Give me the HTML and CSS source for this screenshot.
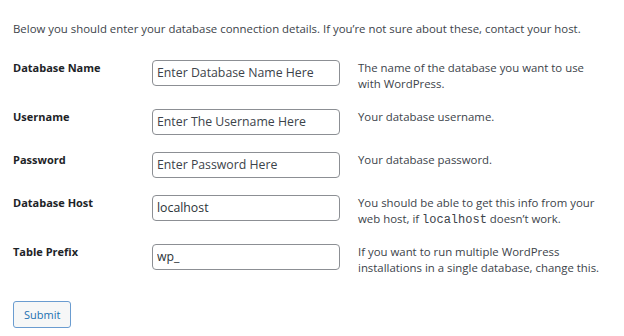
FILE: index.html
```html
<!DOCTYPE html>
<html lang="en">

<head>
    <meta charset="UTF-8">
    <meta name="viewport" content="width=device-width, initial-scale=1.0">
    <title>Database setup</title>
    <link rel="stylesheet" href="styles.css">
</head>

<body>
    <form class="setup" method="post">
        <p class="intro">Below you should enter your database connection details. If you’re not sure about these, contact your host.</p>
        <div class="form-table">
            <label class="label" for="dbname">Database Name</label>
            <input class="field" id="dbname" type="text" placeholder="Enter Database Name Here">
            <p class="desc">The name of the database you want to use with WordPress.</p>

            <label class="label" for="uname">Username</label>
            <input class="field" id="uname" type="text" placeholder="Enter The Username Here">
            <p class="desc">Your database username.</p>

            <label class="label" for="pwd">Password</label>
            <input class="field" id="pwd" type="text" placeholder="Enter Password Here">
            <p class="desc">Your database password.</p>

            <label class="label" for="dbhost">Database Host</label>
            <input class="field" id="dbhost" type="text" value="localhost">
            <p class="desc">You should be able to get this info from your web host, if <code>localhost</code> doesn’t work.</p>

            <label class="label" for="prefix">Table Prefix</label>
            <input class="field" id="prefix" type="text" value="wp_">
            <p class="desc">If you want to run multiple WordPress installations in a single database, change this.</p>
        </div>
        <button class="submit" type="submit">Submit</button>
    </form>
</body>

</html>
```

FILE: styles.css
```css
* {
    margin: 0;
    padding: 0;
    box-sizing: border-box;
}

body {
    font-family: 'Open Sans', sans-serif;
    font-size: 11.4px;
    color: #3c434a;
    background: #fff;
}

.setup {
    padding: 21px 13px 0;
}

.intro {
    line-height: 16px;
    margin-bottom: 14px;
}

.form-table {
    display: grid;
    grid-template-columns: 139px 206px 246px;
    align-items: start;
}

.form-table > * {
    margin: 8.5px 0;
}

.label {
    font-size: 11px;
    font-weight: 700;
    color: #1d2327;
    line-height: 16px;
}

.field {
    width: 188px;
    height: 26px;
    border: 1px solid #8c8f94;
    border-radius: 4px;
    padding: 0 4px;
    font-family: inherit;
    font-size: 12.3px;
    color: #2c3338;
}

.field::placeholder {
    color: #3c434a;
    opacity: 1;
}

.desc {
    line-height: 16px;
}

code {
    font-family: 'Liberation Mono', monospace;
    font-size: 12px;
    line-height: 1;
}

.submit {
    margin-top: 17px;
    padding: 0 10px;
    height: 27px;
    background: #f6f7f7;
    border: 1px solid #6a9cd0;
    border-radius: 3px;
    color: #2271b1;
    font-family: inherit;
    font-size: 11px;
}
```
